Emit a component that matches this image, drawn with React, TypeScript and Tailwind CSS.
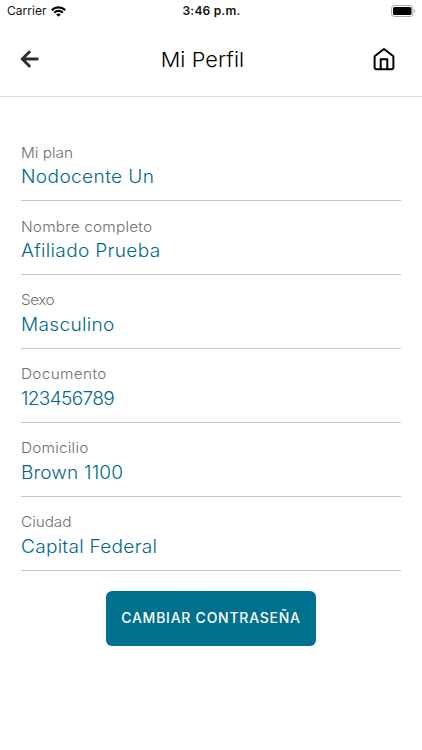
interface Field {
    label: string;
    value: string;
    labelClass: string;
    valueClass: string;
}

const fields: Field[] = [
    { label: 'Mi plan', value: 'Nodocente Un', labelClass: 'tracking-[0px]', valueClass: 'tracking-[0.35px]' },
    { label: 'Nombre completo', value: 'Afiliado Prueba', labelClass: 'tracking-[0.18px]', valueClass: 'tracking-[0.3px]' },
    { label: 'Sexo', value: 'Masculino', labelClass: 'tracking-[-0.5px]', valueClass: 'tracking-[0.3px]' },
    { label: 'Documento', value: '123456789', labelClass: 'tracking-[0.3px]', valueClass: 'tracking-[-0.65px]' },
    { label: 'Domicilio', value: 'Brown 1100', labelClass: 'tracking-[0.2px]', valueClass: 'tracking-[0.15px]' },
    { label: 'Ciudad', value: 'Capital Federal', labelClass: 'tracking-[-0.05px]', valueClass: 'tracking-[0.25px]' },
];

function StatusBar() {
    return (
        <div className="grid grid-cols-3 items-center h-[22px] pl-[7px] pr-[6px] text-[12px] text-[#111]">
            <div className="flex items-center gap-[4px]">
                <span className="tracking-[0.05px]">Carrier</span>
                <svg width="15" height="11" viewBox="0 0 15 11" fill="none" stroke="#000" strokeWidth="2.2">
                    <path d="M0.8 4.1a9.6 9.6 0 0 1 13.4 0" />
                    <path d="M3.2 6.7a6.2 6.2 0 0 1 8.6 0" />
                    <path d="M7.5 10.8 5.2 8.5a3.3 3.3 0 0 1 4.6 0z" fill="#000" stroke="none" />
                </svg>
            </div>
            <span className="text-center font-semibold tracking-[0.2px]">3:46 p.m.</span>
            <div className="flex justify-end">
                <svg width="25" height="12" viewBox="0 0 25 12">
                    <rect x="0.5" y="0.5" width="21.5" height="11" rx="3" fill="#fff" stroke="#a9a9a9" />
                    <rect x="2" y="2" width="18.5" height="8" rx="1.6" fill="#000" />
                    <path d="M23.3 4.2v3.6c1.3-.5 1.3-3.1 0-3.6z" fill="#a9a9a9" />
                </svg>
            </div>
        </div>
    );
}

function Header() {
    return (
        <header className="flex items-center justify-between h-[75px] pl-[20px] pr-[26px] border-b border-[#dcdcdc]">
            <button aria-label="Volver" className="w-[24px]">
                <svg width="20" height="18" viewBox="0 0 20 18" fill="none" stroke="#2f2f2f" strokeWidth="2.9" strokeLinecap="round" strokeLinejoin="round">
                    <path d="M9.3 2 2.2 9l7.1 7M2.6 9H17.3" />
                </svg>
            </button>
            <h1 className="mr-[11px] pt-px scale-x-[1.06] text-[20.5px] leading-6 font-light text-black tracking-[0.1px]">Mi Perfil</h1>
            <button aria-label="Inicio">
                <svg width="24" height="24" viewBox="0 0 24 24" fill="none" stroke="#000" strokeWidth="2" strokeLinejoin="round">
                    <path d="M2.6 9.2 12 2l9.4 7.2v10.9a2.2 2.2 0 0 1-2.2 2.2H4.8a2.2 2.2 0 0 1-2.2-2.2z" />
                    <path d="M8.7 22V12.2h6.6V22" />
                </svg>
            </button>
        </header>
    );
}

export default function App() {
    return (
        <div className="w-full h-[750px] bg-white overflow-hidden font-['Inter',sans-serif]">
            <StatusBar />
            <Header />
            <main className="px-[21px] pt-[30.2px]">
                {fields.map((field) => (
                    <div key={field.label} className="h-[73.9px] pt-[15.5px] border-b border-[#c8c8c8]">
                        <p className={`origin-left scale-x-[1.06] text-[14.5px] leading-5 font-light text-[#6f6f6f] ${field.labelClass}`}>{field.label}</p>
                        <p className={`mt-[0.7px] origin-left scale-x-[1.06] text-[18px] leading-7 font-light text-[#00688a] ${field.valueClass}`}>{field.value}</p>
                    </div>
                ))}
                <div className="flex justify-center mt-[20.4px]">
                    <button className="w-[210px] h-[55px] pb-[2px] rounded-[6px] bg-[#00708f] text-white text-[14px] font-medium tracking-[0.75px] whitespace-nowrap">
                        CAMBIAR CONTRASEÑA
                    </button>
                </div>
            </main>
        </div>
    );
}
